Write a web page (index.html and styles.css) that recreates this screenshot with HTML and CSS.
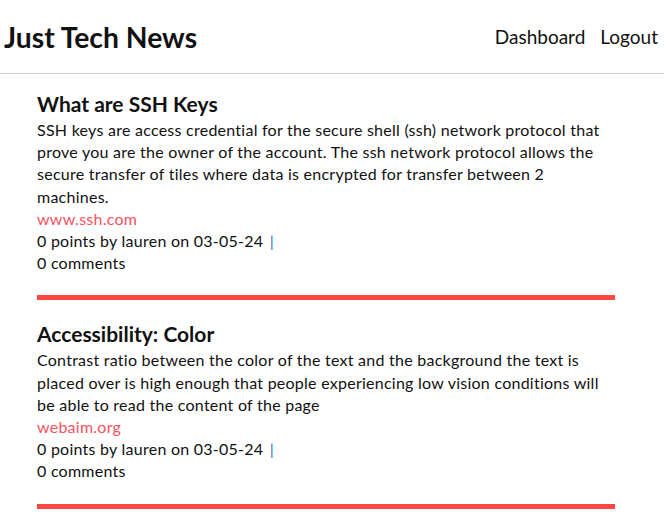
FILE: index.html
```html
<!DOCTYPE html>
<html lang="en">
<head>
<meta charset="utf-8">
<title>Just Tech News</title>
<link rel="stylesheet" href="styles.css">
</head>
<body>
<header class="site-header">
  <h1 class="brand">Just Tech News</h1>
  <nav class="nav">
    <a href="#">Dashboard</a>
    <a href="#">Logout</a>
  </nav>
</header>
<main class="posts">
  <article class="post">
    <h2 class="post-title">What are SSH Keys</h2>
    <p class="post-body">SSH keys are access credential for the secure shell (ssh) network protocol that prove you are the owner of the account. The ssh network protocol allows the secure transfer of tiles where data is encrypted for transfer between 2 machines.</p>
    <a class="post-link" href="#">www.ssh.com</a>
    <p class="post-meta">0 points by lauren on 03-05-24 <span class="sep">|</span></p>
    <p class="post-meta">0 comments</p>
  </article>
  <article class="post">
    <h2 class="post-title">Accessibility: Color</h2>
    <p class="post-body">Contrast ratio between the color of the text and the background the text is placed over is high enough that people experiencing low vision conditions will be able to read the content of the page</p>
    <a class="post-link" href="#">webaim.org</a>
    <p class="post-meta">0 points by lauren on 03-05-24 <span class="sep">|</span></p>
    <p class="post-meta">0 comments</p>
  </article>
</main>
</body>
</html>
```
FILE: styles.css
```css
html, body {
  margin: 0;
  padding: 0;
  background: #fff;
  color: #111;
  font-family: Lato, "Liberation Sans", sans-serif;
}

.site-header {
  display: flex;
  align-items: center;
  justify-content: space-between;
  height: 73px;
  padding: 0 6px 0 4px;
  border-bottom: 1px solid #cfcfcf;
}

.brand {
  margin: 0;
  font-size: 28.3px;
  font-weight: 700;
}

.nav {
  display: flex;
  gap: 15px;
  font-size: 19px;
}

.nav a {
  color: #111;
  text-decoration: none;
}

.posts {
  padding: 17px 49px 0 37px;
}

.post {
  padding-bottom: 21px;
  border-bottom: 5px solid #fc4841;
  margin-bottom: 21px;
  font-size: 16px;
  line-height: 22.2px;
  letter-spacing: 0.25px;
}

.post-title {
  margin: 0 0 2px;
  font-size: 21px;
  line-height: 26px;
  font-weight: 700;
  letter-spacing: 0;
}

.post-body {
  margin: 0;
}

.post-link {
  display: block;
  color: #f5535e;
  text-decoration: none;
}

.post-meta {
  margin: 0;
}

.sep {
  color: #1b78c8;
  margin-left: 2px;
}
```
